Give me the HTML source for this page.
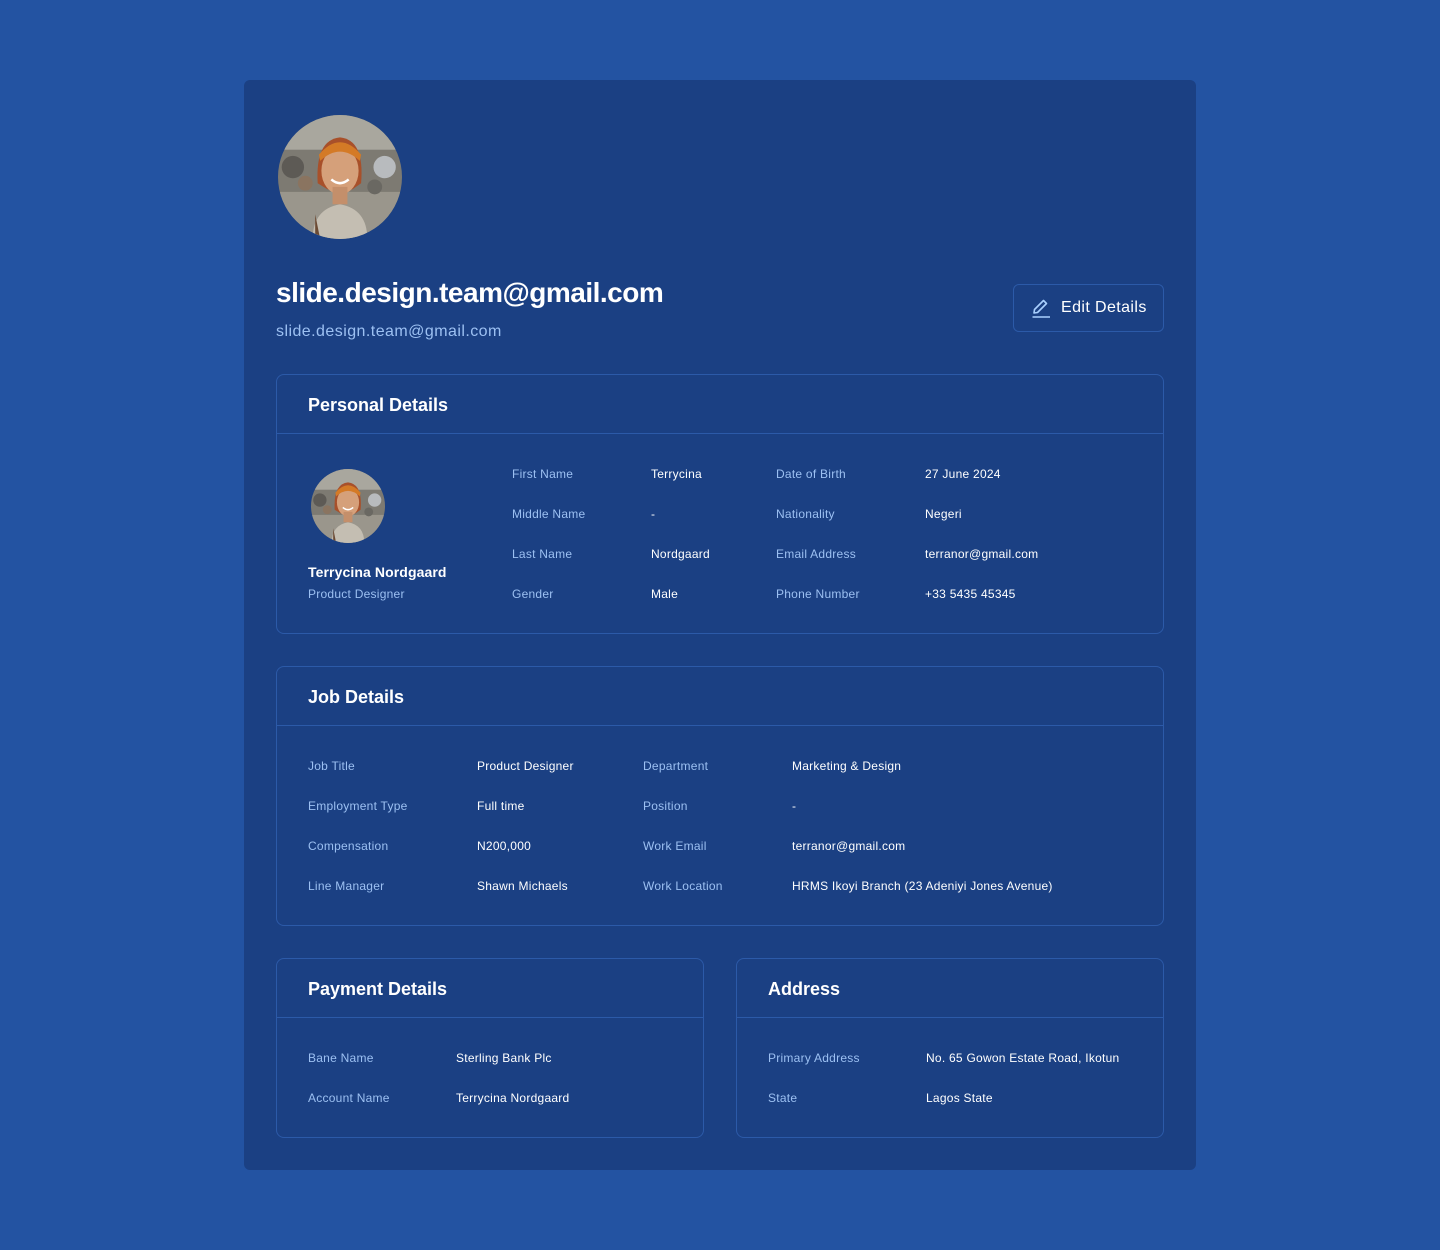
<!DOCTYPE html>
<html><head><meta charset="utf-8"><style>
*{margin:0;padding:0;box-sizing:border-box}
body{width:1440px;height:1250px;background:#2353a2;font-family:"Liberation Sans",sans-serif;position:relative;overflow:hidden}
.card{position:absolute;left:244px;top:80px;width:952px;height:1090px;background:#1b4083;border-radius:6px}
.a{position:absolute;white-space:nowrap}
.box{position:absolute;border:1px solid #2c5aa8;border-radius:8px}
.box .hd{position:absolute;left:0;right:0;top:58px;border-top:1px solid #2c5aa8}
.ht{position:absolute;left:31px;top:20px;font-size:18px;font-weight:bold;color:#fff}
.l{position:absolute;font-size:12px;color:#9cc0f2;white-space:nowrap;letter-spacing:0.25px}
.v{position:absolute;font-size:12px;color:#fff;white-space:nowrap;letter-spacing:0.25px}
</style></head><body>
<svg width="0" height="0" style="position:absolute"><defs>
<clipPath id="c"><circle cx="50" cy="50" r="50"/></clipPath>
<g id="av"><g clip-path="url(#c)">
<rect width="100" height="100" fill="#7d7a72"/>
<rect y="0" width="100" height="28" fill="#a9a79e"/>
<rect y="62" width="100" height="38" fill="#9a968c"/>
<circle cx="12" cy="42" r="9" fill="#5d5a55"/><circle cx="22" cy="55" r="6" fill="#8a7460"/>
<circle cx="86" cy="42" r="9" fill="#b8bbbe"/><circle cx="78" cy="58" r="6" fill="#6a6862"/>
<path d="M28 100 Q28 76 50 72 Q72 76 72 100Z" fill="#c4beb2"/>
<path d="M30 80 L34 100 L30 100Z" fill="#6b4a34"/>
<path d="M32 55 Q30 20 50 18 Q70 20 67 55 L60 60 L40 60Z" fill="#a8502a"/>
<ellipse cx="50" cy="45" rx="15" ry="19" fill="#d5a07a"/>
<rect x="44" y="58" width="12" height="14" fill="#c48f6b"/>
<path d="M33 32 Q50 12 67 32 L66 37 Q50 22 34 37Z" fill="#d47a26"/>
<path d="M43 52 Q50 58 57 52" stroke="#fff" stroke-width="2" fill="none"/>
</g></g></defs></svg>

<div class="card">
<svg class="a" style="left:34px;top:35px" width="124" height="124" viewBox="0 0 100 100"><use href="#av"/></svg>
<div class="a" style="left:32px;top:197px;font-size:28px;font-weight:bold;color:#fff;letter-spacing:-0.5px">slide.design.team@gmail.com</div>
<div class="a" style="left:32px;top:243px;font-size:16px;color:#9cc0f2;letter-spacing:0.45px">slide.design.team@gmail.com</div>
<div class="a" style="left:769px;top:204px;width:151px;height:48px;border:1px solid #2c5aa8;border-radius:6px;">
<svg style="position:absolute;left:17px;top:13px" width="20" height="20" viewBox="0 0 20 20" fill="none" stroke="#a9d0ff" stroke-width="1.6" stroke-linejoin="round"><path d="M3 15 L3.5 11.5 L12.5 2.5 L15.5 5.5 L6.5 14.5Z"/><path d="M1.5 19H19"/></svg>
<div style="position:absolute;left:47px;top:14px;font-size:16px;color:#fff;letter-spacing:0.4px">Edit Details</div></div>

<div class="box" style="left:32px;top:294px;width:888px;height:260px"><div class="hd"></div><div class="ht">Personal Details</div>
<svg class="a" style="left:34px;top:94px" width="74" height="74" viewBox="0 0 100 100"><use href="#av"/></svg>
<div class="a" style="left:31px;top:189px;font-size:14px;font-weight:bold;color:#fff;letter-spacing:0.1px">Terrycina Nordgaard</div>
<div class="l" style="left:31px;top:212px">Product Designer</div>
<div class="l" style="left:235px;top:92px">First Name</div><div class="v" style="left:374px;top:92px">Terrycina</div>
<div class="l" style="left:235px;top:132px">Middle Name</div><div class="v" style="left:374px;top:132px">-</div>
<div class="l" style="left:235px;top:172px">Last Name</div><div class="v" style="left:374px;top:172px">Nordgaard</div>
<div class="l" style="left:235px;top:212px">Gender</div><div class="v" style="left:374px;top:212px">Male</div>
<div class="l" style="left:499px;top:92px">Date of Birth</div><div class="v" style="left:648px;top:92px">27 June 2024</div>
<div class="l" style="left:499px;top:132px">Nationality</div><div class="v" style="left:648px;top:132px">Negeri</div>
<div class="l" style="left:499px;top:172px">Email Address</div><div class="v" style="left:648px;top:172px">terranor@gmail.com</div>
<div class="l" style="left:499px;top:212px">Phone Number</div><div class="v" style="left:648px;top:212px">+33 5435 45345</div>
</div>

<div class="box" style="left:32px;top:586px;width:888px;height:260px"><div class="hd"></div><div class="ht">Job Details</div>
<div class="l" style="left:31px;top:92px">Job Title</div><div class="v" style="left:200px;top:92px">Product Designer</div>
<div class="l" style="left:31px;top:132px">Employment Type</div><div class="v" style="left:200px;top:132px">Full time</div>
<div class="l" style="left:31px;top:172px">Compensation</div><div class="v" style="left:200px;top:172px">N200,000</div>
<div class="l" style="left:31px;top:212px">Line Manager</div><div class="v" style="left:200px;top:212px">Shawn Michaels</div>
<div class="l" style="left:366px;top:92px">Department</div><div class="v" style="left:515px;top:92px">Marketing &amp; Design</div>
<div class="l" style="left:366px;top:132px">Position</div><div class="v" style="left:515px;top:132px">-</div>
<div class="l" style="left:366px;top:172px">Work Email</div><div class="v" style="left:515px;top:172px">terranor@gmail.com</div>
<div class="l" style="left:366px;top:212px">Work Location</div><div class="v" style="left:515px;top:212px">HRMS Ikoyi Branch (23 Adeniyi Jones Avenue)</div>
</div>

<div class="box" style="left:32px;top:878px;width:428px;height:180px"><div class="hd"></div><div class="ht">Payment Details</div>
<div class="l" style="left:31px;top:92px">Bane Name</div><div class="v" style="left:179px;top:92px">Sterling Bank Plc</div>
<div class="l" style="left:31px;top:132px">Account Name</div><div class="v" style="left:179px;top:132px">Terrycina Nordgaard</div>
</div>
<div class="box" style="left:492px;top:878px;width:428px;height:180px"><div class="hd"></div><div class="ht">Address</div>
<div class="l" style="left:31px;top:92px">Primary Address</div><div class="v" style="left:189px;top:92px">No. 65 Gowon Estate Road, Ikotun</div>
<div class="l" style="left:31px;top:132px">State</div><div class="v" style="left:189px;top:132px">Lagos State</div>
</div>
</div>
</body></html>
